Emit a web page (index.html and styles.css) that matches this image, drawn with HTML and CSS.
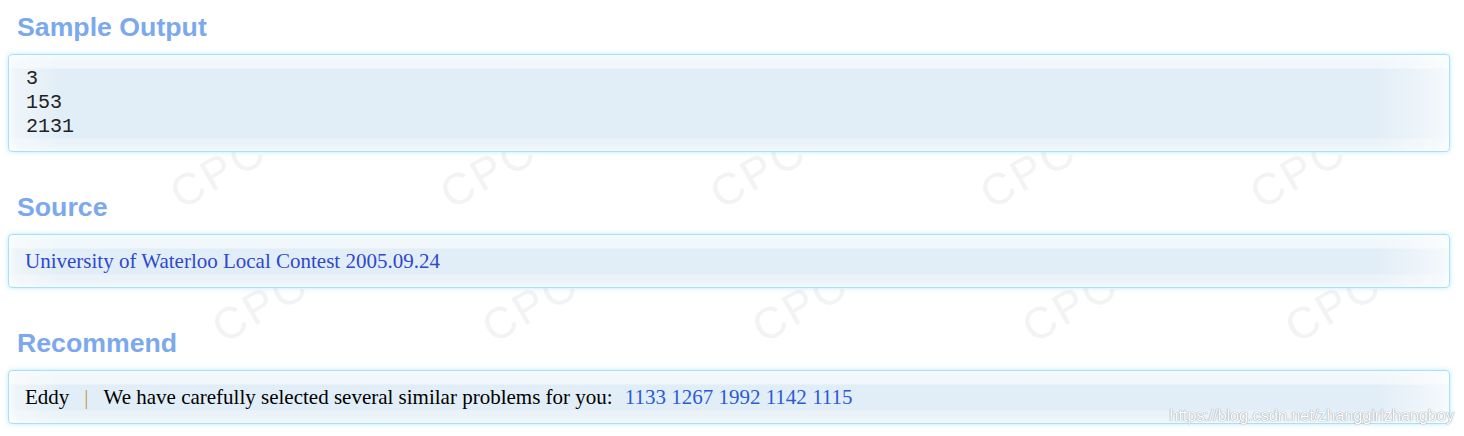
FILE: index.html
```html
<!DOCTYPE html>
<html lang="en">
<head>
<meta charset="utf-8">
<title>Problem</title>
<link rel="stylesheet" href="styles.css">
</head>
<body>
<div class="watermarks" aria-hidden="true">
  <span class="wm" style="left:185px;top:172px">CPC</span>
  <span class="wm" style="left:455px;top:172px">CPC</span>
  <span class="wm" style="left:725px;top:172px">CPC</span>
  <span class="wm" style="left:995px;top:172px">CPC</span>
  <span class="wm" style="left:1265px;top:172px">CPC</span>
  <span class="wm" style="left:227px;top:306px">CPC</span>
  <span class="wm" style="left:497px;top:306px">CPC</span>
  <span class="wm" style="left:767px;top:306px">CPC</span>
  <span class="wm" style="left:1037px;top:306px">CPC</span>
  <span class="wm" style="left:1300px;top:306px">CPC</span>
</div>
<main class="page">
  <section class="panel">
    <h2 class="panel-title">Sample Output</h2>
    <div class="panel-content">
<pre class="code">3
153
2131</pre>
    </div>
  </section>
  <section class="panel">
    <h2 class="panel-title">Source</h2>
    <div class="panel-content text">
      <a class="link src" href="#">University of Waterloo Local Contest 2005.09.24</a>
    </div>
  </section>
  <section class="panel">
    <h2 class="panel-title">Recommend</h2>
    <div class="panel-content text">
      <a class="plain" href="#">Eddy</a><span class="sep">|</span><span>We have carefully selected several similar problems for you:</span><span class="nums"><a class="link" href="#">1133</a> <a class="link" href="#">1267</a> <a class="link" href="#">1992</a> <a class="link" href="#">1142</a> <a class="link" href="#">1115</a></span>
    </div>
  </section>
</main>
<div class="credit">https://blog.csdn.net/zhanggirlzhangboy</div>
</body>
</html>
```

FILE: styles.css
```css
html, body {
  margin: 0;
  padding: 0;
  background: #ffffff;
}

body {
  position: relative;
  width: 1464px;
  height: 436px;
  overflow: hidden;
  font-family: "Liberation Serif", "Times New Roman", serif;
}

.watermarks {
  position: absolute;
  inset: 0;
  z-index: 0;
  pointer-events: none;
}

.wm {
  position: absolute;
  font-family: "Liberation Sans", Arial, sans-serif;
  font-size: 44px;
  font-weight: 400;
  letter-spacing: 3px;
  color: #f3f3f3;
  transform: rotate(-30deg);
  transform-origin: left bottom;
  line-height: 1;
}

.page {
  position: relative;
  z-index: 1;
  display: flex;
  flex-direction: column;
  gap: 38px;
  padding: 10px 14px 0 8px;
}

.panel {
  display: flex;
  flex-direction: column;
  gap: 10px;
}

.panel-title {
  margin: 0;
  padding-left: 9px;
  font-family: "Liberation Sans", Arial, sans-serif;
  font-size: 26.7px;
  font-weight: 700;
  line-height: 34px;
  color: #7ca9ed;
}

.panel-content {
  border: 1px solid #a4e2f4;
  border-radius: 4px;
  box-shadow: 0 0 5px rgba(140, 215, 245, 0.55), inset 0 0 10px rgba(255, 255, 255, 0.9);
  background:
    linear-gradient(to bottom, rgba(255,255,255,0.5) 0, rgba(255,255,255,0.5) 13px, rgba(255,255,255,0) 14px, rgba(255,255,255,0) calc(100% - 13px), rgba(255,255,255,0.3) calc(100% - 12px)),
    linear-gradient(to right, #f0f6fa 0, #e2eef7 50px, #e2eef7 calc(100% - 70px), #f5f9fc 100%);
  padding: 12px 16px;
}

.code {
  margin: 0;
  padding-left: 1px;
  font-family: "Liberation Mono", "Courier New", monospace;
  font-size: 20px;
  line-height: 24px;
  color: #222;
}

.text {
  padding: 14px 16px;
  font-size: 21px;
  line-height: 24px;
  color: #000;
}

.link {
  color: #2a5ad4;
  text-decoration: none;
}

.src {
  color: #2f48cc;
}

.plain {
  color: #000;
  text-decoration: none;
}

.sep {
  color: #c8944a;
  margin: 0 15px 0 15px;
}

.nums {
  margin-left: 12px;
}

.credit {
  position: absolute;
  z-index: 2;
  right: 10px;
  top: 406px;
  font-family: "Liberation Sans", Arial, sans-serif;
  font-size: 16.6px;
  letter-spacing: -0.2px;
  color: #ffffff;
  text-shadow: 0 0 1px #8f98a3, 0 0 1px #8f98a3;
}
```
